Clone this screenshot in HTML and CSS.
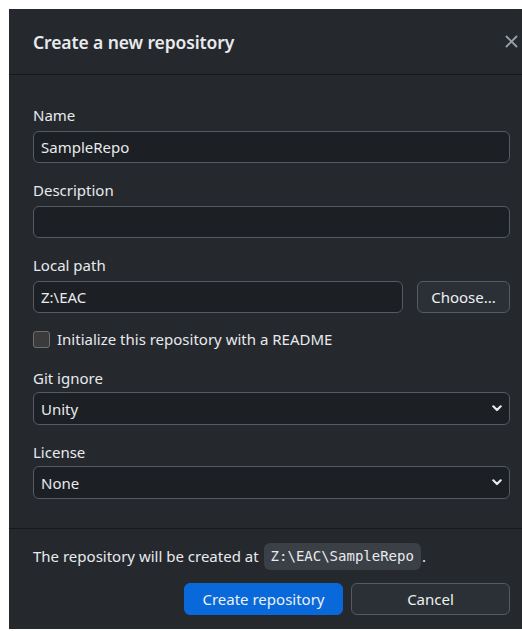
FILE: index.html
```html
<!DOCTYPE html>
<html lang="en">
<head>
<meta charset="utf-8">
<title>Create a new repository</title>
<link rel="stylesheet" href="styles.css">
</head>
<body>
<div class="dialog">
  <header class="dialog-header">
    <h1 class="dialog-title">Create a new repository</h1>
    <button class="close-btn" aria-label="Close">
      <svg width="13" height="13" viewBox="0 0 13 13"><path d="M1.5 1.5 L11.5 11.5 M11.5 1.5 L1.5 11.5" stroke="currentColor" stroke-width="1.8" fill="none" stroke-linecap="round"/></svg>
    </button>
  </header>

  <div class="dialog-body">
    <div class="field">
      <label class="field-label">Name</label>
      <div class="text-input">SampleRepo</div>
    </div>

    <div class="field">
      <label class="field-label">Description</label>
      <div class="text-input"></div>
    </div>

    <div class="field">
      <label class="field-label">Local path</label>
      <div class="path-row">
        <div class="text-input path-input">Z:\EAC</div>
        <button class="btn btn-secondary choose-btn">Choose...</button>
      </div>
    </div>

    <div class="check-row">
      <span class="checkbox"></span>
      <span class="check-label">Initialize this repository with a README</span>
    </div>

    <div class="field field-select">
      <label class="field-label">Git ignore</label>
      <div class="select-input">
        <span>Unity</span>
        <svg class="chevron" width="10" height="7" viewBox="0 0 10 7"><path d="M1.3 1.3 L5 5 L8.7 1.3" stroke="currentColor" stroke-width="2.2" fill="none" stroke-linecap="round" stroke-linejoin="round"/></svg>
      </div>
    </div>

    <div class="field field-select">
      <label class="field-label">License</label>
      <div class="select-input">
        <span>None</span>
        <svg class="chevron" width="10" height="7" viewBox="0 0 10 7"><path d="M1.3 1.3 L5 5 L8.7 1.3" stroke="currentColor" stroke-width="2.2" fill="none" stroke-linecap="round" stroke-linejoin="round"/></svg>
      </div>
    </div>
  </div>

  <footer class="dialog-footer">
    <p class="footer-note">The repository will be created at <code class="path-code">Z:\EAC\SampleRepo</code>.</p>
    <div class="footer-actions">
      <button class="btn btn-primary">Create repository</button>
      <button class="btn btn-secondary">Cancel</button>
    </div>
  </footer>
</div>
</body>
</html>
```

FILE: styles.css
```css
html {
  overflow: hidden;
  background: #ffffff;
}

body {
  margin: 0;
  padding: 9px 0 0 9px;
  font-family: "Noto Sans", "Open Sans", sans-serif;
  color: #e8eaed;
}

.dialog {
  width: 525px;
  height: 620px;
  background: #25292e;
  display: flex;
  flex-direction: column;
  box-sizing: border-box;
}

.dialog-header {
  height: 66px;
  box-sizing: border-box;
  border-bottom: 1px solid #16191c;
  display: flex;
  align-items: center;
  justify-content: space-between;
  padding: 0 16px 0 24px;
}

.dialog-title {
  margin: 0;
  font-size: 17.5px;
  font-weight: 600;
  color: #e8eaed;
  letter-spacing: -0.1px;
}

.close-btn {
  background: none;
  border: 0;
  padding: 0;
  color: #9aa1a9;
  display: flex;
}

.dialog-body {
  padding: 30px 24px 0 24px;
  flex: 1;
  box-sizing: border-box;
  border-bottom: 1px solid #16191c;
}

.field {
  display: flex;
  flex-direction: column;
  margin-bottom: 17px;
}

.field-label {
  font-size: 15px;
  line-height: 20px;
  margin-bottom: 6px;
  color: #e8eaed;
}

.field-select .field-label {
  margin-bottom: 4px;
}

.text-input,
.select-input {
  height: 32px;
  box-sizing: border-box;
  background: #1c1f23;
  border: 1px solid #555b63;
  border-radius: 6px;
  padding: 0 7px;
  font-size: 15px;
  display: flex;
  align-items: center;
  color: #e8eaed;
}

.select-input {
  height: 33px;
  justify-content: space-between;
  padding-right: 7px;
}

.chevron {
  color: #e8eaed;
}

.path-row {
  display: flex;
  gap: 14px;
}

.path-input {
  flex: 1;
}

.btn {
  height: 32px;
  box-sizing: border-box;
  border-radius: 6px;
  font-family: inherit;
  font-size: 15px;
  color: #eef0f2;
  cursor: pointer;
}

.btn-secondary {
  background: #2b3037;
  border: 1px solid #555b63;
}

.choose-btn {
  width: 93px;
  padding: 0;
}

.check-row {
  display: flex;
  align-items: center;
  gap: 7px;
  margin: 0 0 18px 0;
  position: relative;
  top: -1px;
}

.checkbox {
  width: 17px;
  height: 17px;
  box-sizing: border-box;
  background: #3b3b3b;
  border: 1.5px solid #6e6e6e;
  border-radius: 3px;
}

.check-label {
  font-size: 15px;
  line-height: 20px;
}

.dialog-body .field:last-child {
  margin-bottom: 0;
}

.dialog-footer {
  padding: 14px 24px 14px 24px;
  display: flex;
  flex-direction: column;
  gap: 13px;
}

.footer-note {
  margin: 0;
  font-size: 15px;
  line-height: 27px;
  display: flex;
  align-items: center;
}

.path-code {
  font-family: "DejaVu Sans Mono", "Liberation Mono", monospace;
  font-size: 14px;
  background: #3b4047;
  border-radius: 6px;
  padding: 0 7px;
  margin-left: 5px;
  margin-right: 1px;
  line-height: 27px;
  color: #e8eaed;
}

.footer-actions {
  display: flex;
  justify-content: flex-end;
  gap: 8px;
}

.footer-actions .btn {
  width: 159px;
}

.btn-primary {
  background: #0969da;
  border: 1px solid #0969da;
}
```
